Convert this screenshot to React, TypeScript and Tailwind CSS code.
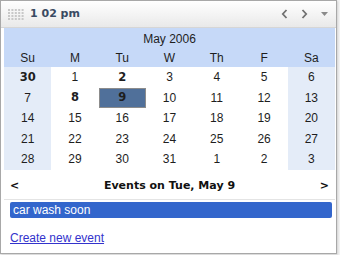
const weeks: number[][] = [
  [30, 1, 2, 3, 4, 5, 6],
  [7, 8, 9, 10, 11, 12, 13],
  [14, 15, 16, 17, 18, 19, 20],
  [21, 22, 23, 24, 25, 26, 27],
  [28, 29, 30, 31, 1, 2, 3],
];

const dayNames = ['Su', 'M', 'Tu', 'W', 'Th', 'F', 'Sa'];

// dates that carry events in May (plus 30 Apr)
const boldKeys = ['0-0', '0-2', '1-1', '1-2'];

function Grip() {
  const dots = [];
  for (let r = 0; r < 4; r++) {
    for (let c = 0; c < 5; c++) {
      dots.push(<rect key={`${r}-${c}`} x={c * 3.4} y={r * 3} width="2" height="2" fill="#c8c8c8" />);
    }
  }
  return (
    <svg width="17" height="11" viewBox="0 0 17 11">
      {dots}
    </svg>
  );
}

export default function App() {
  const sans = { fontFamily: '"Liberation Sans", Arial, sans-serif' };
  const bold = { fontFamily: '"DejaVu Sans", Verdana, sans-serif' };

  return (
    <div className="w-[340px] h-[255px] bg-[#f4f4f4]">
      <div className="w-[337px] h-[254px] border border-[#a8a8a8] bg-white flex flex-col shadow-[1px_1px_2px_rgba(0,0,0,0.15)]">
        {/* title bar */}
        <div className="h-[27px] shrink-0 flex items-center pl-[7px] pr-[8px] bg-gradient-to-b from-white to-[#e9e9e9] border-b border-[#d6d6d6]">
          <Grip />
          <span className="ml-[5px] text-[11px] font-bold text-[#3a4a62]" style={bold}>
            1 02 pm
          </span>
          <div className="ml-auto flex items-center gap-[13px] text-[#707070]">
            <svg width="7" height="10" viewBox="0 0 7 10">
              <path d="M5.5 1 L1.8 5 L5.5 9" fill="none" stroke="currentColor" strokeWidth="1.8" />
            </svg>
            <svg width="7" height="10" viewBox="0 0 7 10">
              <path d="M1.5 1 L5.2 5 L1.5 9" fill="none" stroke="currentColor" strokeWidth="1.8" />
            </svg>
            <svg width="7" height="5" viewBox="0 0 7 5">
              <path d="M0 0 L7 0 L3.5 4 Z" fill="#8a8a8a" />
            </svg>
          </div>
        </div>

        {/* calendar */}
        <div className="pl-[3px]">
          <div className="w-[331px]" style={sans}>
            <div className="bg-[#c6d9f8] text-[12px] text-[#1e1e1e]">
              <div className="h-[20px] pt-[1px] flex items-center justify-center">May 2006</div>
              <div className="h-[19px] grid grid-cols-7 items-center text-center">
                {dayNames.map((d) => (
                  <span key={d}>{d}</span>
                ))}
              </div>
            </div>
            <div className="grid grid-cols-7 text-[12px] text-[#1e1e1e]">
              {weeks.map((week, wi) =>
                week.map((day, di) => {
                  const key = `${wi}-${di}`;
                  const isBold = boldKeys.includes(key);
                  const selected = key === '1-2';
                  const weekend = di === 0 || di === 6;
                  return (
                    <div
                      key={key}
                      className={`h-[20.5px] flex items-center justify-center ${
                        selected
                          ? 'bg-[#50709a] border border-[#8c8c8c]'
                          : weekend
                          ? 'bg-[#e4ecf8]'
                          : ''
                      }`}
                    >
                      <span
                        className={isBold ? 'font-bold text-[11.5px]' : ''}
                        style={isBold ? bold : undefined}
                      >
                        {day}
                      </span>
                    </div>
                  );
                })
              )}
            </div>

            {/* events */}
            <div className="h-[30px] pt-[5px] flex items-center justify-between px-[6px] border-b border-[#e4e4e4] text-[11px] font-bold text-[#111]" style={bold}>
              <span>&lt;</span>
              <span>Events on Tue, May 9</span>
              <span>&gt;</span>
            </div>
            <div className="mt-[2px] ml-[6px] w-[322px] h-[16px] rounded-[2px] bg-[#3366cc] text-white text-[12px] leading-[16px] pl-[3px]">
              car wash soon
            </div>
            <div className="mt-[11px] ml-[6px] text-[12px] text-[#3333cc] underline">
              <span>Create new event</span>
            </div>
          </div>
        </div>
      </div>
    </div>
  );
}
